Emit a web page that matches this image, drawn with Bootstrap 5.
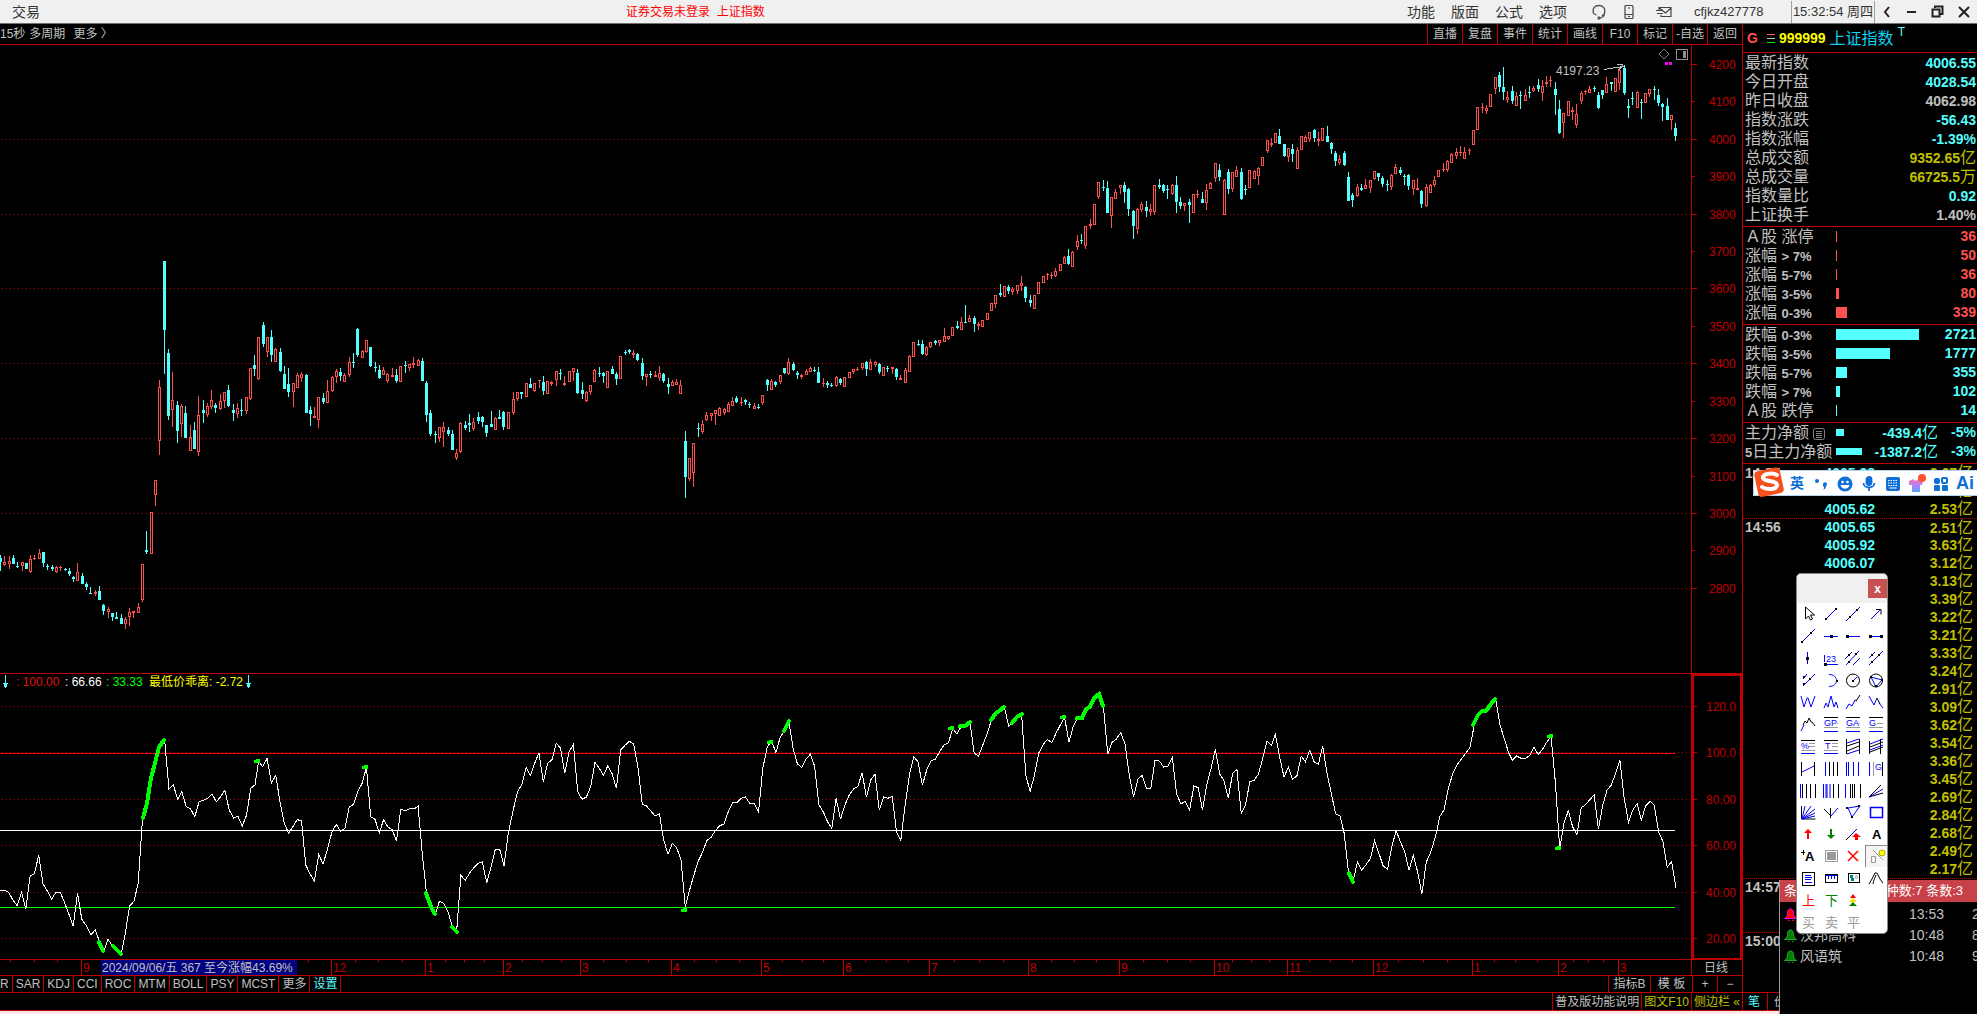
<!DOCTYPE html>
<html lang="zh-CN">
<head>
    <meta charset="UTF-8">
    <meta name="viewport" content="width=device-width, initial-scale=1.0">
    <title>上证指数</title>
    <link rel="stylesheet" href="https://cdn.jsdelivr.net/npm/bootstrap@5.3.0/dist/css/bootstrap.min.css">
    <style>
        :root {
            --line: #c00000;
            --up: #ff5050;
            --down: #54ffff;
            --txt: #c0c0c0;
            --gold: #c0c000;
        }
        body {
            background: #000;
            color: var(--txt);
            font-family: "Liberation Sans", "Noto Sans CJK SC", sans-serif;
            font-size: 12px;
            line-height: 16px;
            overflow-x: hidden;
        }
        button { background: none; border: 0; color: inherit; padding: 0; font-size: inherit; font-weight: inherit; line-height: inherit; white-space: nowrap; }
        .c-up { color: var(--up); }
        .c-down { color: var(--down); }
        .c-gold { color: var(--gold); }
        .c-yellow { color: #ffff00; }
        .c-name { color: #10d0f0; }

        /* title bar */
        .titlebar { height: 24px; background: #f0f0f0; color: #333; border-bottom: 1px solid #707070; font-size: 14px; }
        .titlebar .notice { color: #f00; font-size: 12px; margin-left: 586px; }
        .titlebar .clock { width: 84px; height: 22px; font-size: 13px; line-height: 22px; border-left: 1px solid #a0a0a0; border-right: 1px solid #a0a0a0; }
        .titlebar .account { width: 102px; padding-left: 5px; font-size: 13px; }
        .titlebar svg { display: block; }
        .win-btns { width: 102px; }

        /* rows of bordered buttons */
        .strip { height: 17px; border-top: 1px solid var(--line); }
        .strip-top { height: 21px; border-bottom: 1px solid var(--line); }
        .strip-last { height: 19px; border-top: 1px solid var(--line); border-bottom: 1px solid var(--line); font-size: 12px; font-weight: 400; line-height: 16px; }
        .cell-r button { border-right: 1px solid var(--line); padding: 0 3px; }
        .cell-r button:first-child { padding-left: 0; }
        .cell-l button { border-left: 1px solid var(--line); }
        .strip-top .cell-l button { width: 35px; }
        .strip-last button { padding: 0 2px; }
        .w-a { width: 42px; }
        .w-b { width: 25px; }
        .w-c { width: 51px; }
        .foot { height: 3px; background: #f8e8e8; }

        /* chart */
        .chart { display: block; width: 100%; height: auto; }
        .chart text { font-size: 12px; }

        /* quote column */
        .quote { width: 235px; border-left: 1px solid var(--line); font-size: 16px; line-height: 19px; }
        .quote b { font-size: 14px; font-weight: 700; }
        .quote .lbl b { font-size: 13px; }
        .q-head { height: 29px; border-bottom: 1px solid var(--line); padding: 0 4px; }
        .q-block { border-bottom: 1px solid var(--line); padding: 0 1px 2px 2px; }
        .q-row { height: 19px; white-space: nowrap; }
        .q-row .lbl { width: 91px; }
        .q-bar { height: 11px; background: currentColor; }
        .q-bar.slim { height: 7px; }
        .q-row .pct { width: 38px; }
        .tick { height: 18px; line-height: 18px; padding: 0 4px 0 2px; white-space: nowrap; }
        .tick.minute { border-top: 1px dotted var(--line); line-height: 17px; }
        .tick .t { width: 60px; }
        .tick .p { width: 70px; }
        .tick .yi { color: var(--gold); }

        /* floating windows */
        .desk { position: relative; overflow: hidden; }
        .ime { position: absolute; right: 0; top: 470px; width: 224px; height: 26px; background: #fff; border: 1px solid #b8d4f0; border-right: 0; padding: 0 0 0 31px; z-index: 3; color: #0f6fd8; font-size: 14px; font-weight: 700; }
        .ime .logo { position: absolute; left: 0; top: -5px; }
        .ime button { width: 24px; height: 24px; line-height: 24px; }
        .ime .ai { font-size: 18px; }
        .palette { position: absolute; right: 89px; top: 573px; width: 92px; background: #fff; border-radius: 5px; z-index: 4; border: 1px solid #888; }
        .palette .bar { height: 29px; background: #f0f0f0; border-radius: 4px 4px 0 0; }
        .palette .close-x { width: 19px; height: 19px; background: #c75050; color: #fff; font: 700 12px/16px "Liberation Sans", sans-serif; }
        .tools { display: grid; grid-template-columns: repeat(4, 1fr); }
        .tools button { height: 22px; }
        .tools button.on { background: #f4f4f4; border-left: 1px solid #888; border-top: 1px solid #888; }
        .tools svg { display: block; margin: auto; overflow: visible; }
        .tools text { font-size: 9px; font-family: "Liberation Sans", sans-serif; }
        .tools .cn { font: 13px "Noto Sans CJK SC", sans-serif; }
        .tools .lt { font: 700 13px "Liberation Sans", sans-serif; }
        .alerts { position: absolute; right: 0; top: 880px; width: 198px; height: 134px; background: #000; border-left: 1px solid #a0a0a0; z-index: 2; font-size: 14px; overflow: hidden; }
        .alerts .head { height: 22px; background: #c84048; color: #fff; padding: 0 14px 0 4px; font-size: 13px; }
        .alerts table { width: 220px; table-layout: fixed; }
        .alerts td { height: 21px; padding: 2px 0 0; white-space: nowrap; }
        .alerts .ic { width: 20px; padding-left: 4px; }
        .alerts .nm { width: 109px; }
        .alerts .tm { width: 63px; }
    </style>
</head>
<body>
<div class="desk min-vh-100 d-flex flex-column">

    <header class="titlebar d-flex align-items-center">
        <button type="button" class="ms-2 ps-1">交易</button>
        <span class="notice">证券交易未登录&nbsp; 上证指数</span>
        <div class="ms-auto d-flex align-items-center gap-3">
            <button type="button">功能</button>
            <button type="button">版面</button>
            <button type="button">公式</button>
            <button type="button">选项</button>
        </div>
        <div class="d-flex align-items-center gap-3 ms-4 me-3">
            <button type="button" aria-label="客服"><svg width="16" height="16" fill="none" stroke="#555" stroke-width="1.300"><path d="M2.500 9.500C1 4 4 1.500 8 1.500s7 3 5.500 8M2.500 9.500l3 1.500M13.500 9.500c0 3-3 5-6 4.500M11 12l2.500-2.500"/><circle cx="8" cy="14" r="1"/></svg></button>
            <button type="button" aria-label="手机"><svg width="12" height="16" fill="none" stroke="#444" stroke-width="1.200"><rect x="2" y="1.500" width="8" height="13" rx="1"/><path d="M2 10.500h8M5 12.500h2M5 4h2"/></svg></button>
            <button type="button" aria-label="邮件" class="ms-1"><svg width="18" height="16" fill="none" stroke="#444" stroke-width="1.200"><path d="M4 6V3.500h12v9H6V11M4.500 4l6 5L16 4M1 6.500h6M2 9.500h6"/></svg></button>
        </div>
        <span class="account">cfjkz427778</span>
        <span class="clock text-center text-nowrap">15:32:54 周四</span>
        <div class="win-btns d-flex justify-content-around align-items-center">
            <button type="button" aria-label="返回"><svg width="10" height="14" fill="none" stroke="#222" stroke-width="2"><path d="M7 2L3 7l4 5"/></svg></button>
            <button type="button" aria-label="最小化"><svg width="12" height="12" stroke="#222" stroke-width="2"><path d="M1 6h9"/></svg></button>
            <button type="button" aria-label="还原"><svg width="13" height="13" fill="none" stroke="#222" stroke-width="2"><path d="M4 3V1.500h7.500V9H9"/><rect x="1.500" y="4.500" width="7" height="7"/></svg></button>
            <button type="button" aria-label="关闭"><svg width="12" height="12" stroke="#222" stroke-width="2"><path d="M1 1l10 10M11 1L1 11"/></svg></button>
        </div>
    </header>

    <div class="d-flex flex-grow-1">
        <main class="flex-grow-1 d-flex flex-column">
            <nav class="strip-top d-flex align-items-stretch">
                <button type="button">15秒</button>
                <button type="button" class="ms-1">多周期</button>
                <button type="button" class="ms-2">更多 〉</button>
                <div class="cell-l d-flex ms-auto">
                    <button type="button">直播</button>
                    <button type="button">复盘</button>
                    <button type="button">事件</button>
                    <button type="button">统计</button>
                    <button type="button">画线</button>
                    <button type="button">F10</button>
                    <button type="button">标记</button>
                    <button type="button">-自选</button>
                    <button type="button">返回</button>
                </div>
            </nav>

            <svg class="chart" id="chart" viewBox="0 45 1742 930"></svg>

            <nav class="strip d-flex align-items-stretch">
                <div class="cell-r d-flex">
                    <button type="button">R</button>
                    <button type="button">SAR</button>
                    <button type="button">KDJ</button>
                    <button type="button">CCI</button>
                    <button type="button">ROC</button>
                    <button type="button">MTM</button>
                    <button type="button">BOLL</button>
                    <button type="button">PSY</button>
                    <button type="button">MCST</button>
                    <button type="button">更多</button>
                    <button type="button" class="c-down">设置</button>
                </div>
                <div class="cell-l d-flex ms-auto">
                    <button type="button" class="w-a">指标B</button>
                    <button type="button" class="w-a">模 板</button>
                    <button type="button" class="w-b">+</button>
                    <button type="button" class="w-b">−</button>
                </div>
            </nav>
            <footer class="strip-last cell-l d-flex justify-content-end align-items-stretch">
                <button type="button">普及版功能说明</button>
                <button type="button" class="c-gold">图文F10</button>
                <button type="button" class="c-gold w-c">侧边栏 «</button>
            </footer>
        </main>

        <aside class="quote d-flex flex-column flex-shrink-0">
            <div class="q-head d-flex align-items-center">
                <b class="c-up">G</b>
                <svg class="ms-2" width="9" height="11" shape-rendering="crispEdges"><path d="M1 1.500h8" stroke="#ff5050"/><path d="M1 5.500h8" stroke="#c0c0c0"/><path d="M1 9.500h8" stroke="#0f0"/></svg>
                <b class="c-yellow ms-1">999999</b>
                <span class="c-name ms-1">上证指数</span><sup class="c-down ms-1">T</sup>
            </div>
            <div class="q-block" id="quoteRows"></div>
            <div class="q-block" id="upRows"></div>
            <div class="q-block" id="downRows"></div>
            <div class="q-block" id="flowRows"></div>
            <div class="flex-grow-1" id="ticks"></div>
            <div class="strip-last cell-r d-flex align-items-stretch">
                <button type="button" class="c-down w-b">笔</button>
                <button type="button" class="w-b">价</button>
            </div>
        </aside>
    </div>
    <div class="foot"></div>

    <!-- input method bar -->
    <div class="ime d-flex align-items-center">
        <svg class="logo" width="32" height="32"><rect x="2" y="3" width="26" height="26" rx="4" fill="#f4511e" transform="rotate(-12 16 16)"/><path d="M23 9c-5-3-15-1-14 3 1 4 14 2 14 7 0 5-11 5-15 2" fill="none" stroke="#fff" stroke-width="4" stroke-linecap="round"/></svg>
        <button type="button">英</button>
        <button type="button" aria-label="标点"><svg width="16" height="16" fill="#0f6fd8"><circle cx="4" cy="5" r="2"/><path d="M10 8a2 2 0 1 1 3 2c0 2-1 3-3 4 1-1 1-2 1-3-1 0-1-2-1-3z"/></svg></button>
        <button type="button" aria-label="表情"><svg width="16" height="16"><circle cx="8" cy="8" r="7.500" fill="#0f6fd8"/><circle cx="5.500" cy="6" r="1.300" fill="#fff"/><circle cx="10.500" cy="6" r="1.300" fill="#fff"/><path d="M3.500 9h9c-1 5-8 5-9 0z" fill="#fff"/></svg></button>
        <button type="button" aria-label="语音"><svg width="16" height="16" fill="none" stroke="#0f6fd8" stroke-width="1.800"><rect x="5.500" y="1" width="5" height="8" rx="2.500" fill="#0f6fd8"/><path d="M2.500 7c0 6 11 6 11 0M8 12v3"/></svg></button>
        <button type="button" aria-label="键盘"><svg width="16" height="16"><rect x="1" y="1" width="14" height="14" rx="2" fill="#0f6fd8"/><path d="M3 4.500h10M3 7h10M3 9.500h10" stroke="#fff" stroke-dasharray="1.500 1"/><path d="M4.500 12h7" stroke="#fff"/></svg></button>
        <button type="button" aria-label="皮肤"><svg width="20" height="20"><defs><linearGradient id="skin" x1="0" y1="0" x2="0" y2="1"><stop offset="0" stop-color="#f27aa8"/><stop offset=".5" stop-color="#b080f8"/><stop offset="1" stop-color="#50a8ff"/></linearGradient></defs><path d="M2 7l4-2c1 2 4 2 5 0l5 2-1 4h-2v7H5v-7H2z" fill="url(#skin)"/><circle cx="15" cy="4" r="4" fill="#ff5030"/></svg></button>
        <button type="button" aria-label="工具箱"><svg width="16" height="16" fill="#0f6fd8"><rect x="1" y="2" width="6" height="6" rx="2"/><rect x="9" y="2" width="5" height="5" rx="1" fill="none" stroke="#0f6fd8" stroke-width="2"/><rect x="1" y="9" width="6" height="6" rx="1"/><rect x="9" y="9" width="6" height="6" rx="1"/></svg></button>
        <button type="button" class="ai">Ai</button>
    </div>

    <!-- drawing tools -->
    <div class="palette">
        <div class="bar d-flex justify-content-end align-items-center"><button type="button" class="close-x">x</button></div>
        <div class="tools" id="tools"></div>
    </div>

    <!-- alert window -->
    <div class="alerts">
        <div class="head d-flex justify-content-between align-items-center"><span>条</span><span>品种数:7 条数:3</span></div>
        <table>
            <tbody id="alertRows"></tbody>
        </table>
    </div>
</div>

<script src="https://cdn.jsdelivr.net/npm/bootstrap@5.3.0/dist/js/bootstrap.bundle.min.js"></script>
<script>
    const STEP = 4.303;   // distance between two bars

    // [x of the first bar, y origin, bars]; a bar is colour + high, body top, body bottom, low (1/3 px)
    const bars = [
        [0.5, 240, 'd945,954,966,993 u948,966,975,978 u948,963,972,987 d945,954,972,972 d966,978,981,984 u966,966,978,993 d969,969,987,987 u945,957,996,999 u945,954,957,960 u927,939,957,957 d936,936,969,981 d972,978,981,990 d975,981,987,993 u978,981,996,999 u978,981,984,993 d984,987,990,993 d984,993,1002,1008 d1008,1011,1017,1026 u969,996,1023,1023 d999,1008,1032,1032'],
        [86.6, 240, 'd1026,1032,1041,1050 d1041,1059,1062,1062 u1050,1056,1062,1068 d1038,1053,1080,1080 d1092,1095,1113,1125 u1101,1107,1116,1134 d1119,1119,1131,1143 d1116,1131,1137,1137 d1122,1134,1152,1152 u1131,1137,1152,1167 u1104,1116,1131,1158 u1113,1113,1119,1134 u1089,1101,1119,1119 u972,972,1080,1086 d873,930,936,942 u816,816,942,942 u720,720,765,798 u420,441,603,645'],
        [164.3, 240, 'd63,63,270,402 d327,339,528,540 u396,480,510,561 d483,495,573,609 u492,498,552,591 d498,519,594,594 u555,591,633,633 d546,570,627,627 u468,525,636,648 d480,510,519,549 u489,498,525,531 u450,480,501,507 d489,495,504,519 u462,483,507,510 u456,456,483,504 d435,450,498,501 d492,510,519,543 u489,504,522,534 d477,510,513,528 u471,471,513,522 u384,384,477,480 d345,375,387,408'],
        [258.7, 240, 'u291,291,417,420 d246,255,312,321 u291,291,336,351 d270,291,345,366 u324,327,366,366 d324,336,393,396 d378,402,447,447 d384,432,456,471 u429,429,456,501 u399,405,444,444 u396,402,414,426 d402,405,519,519 d498,510,522,558 u501,528,534,534 u471,471,540,564 d459,474,486,492 u420,453,489,489'],
        [332, 240, 'u408,411,453,456 u387,393,411,429 d384,396,408,423 u399,405,426,426 u351,366,405,411 d339,366,369,384 d264,267,345,351 u330,333,354,354 u300,300,336,339 d321,321,378,381 d366,381,384,396 d375,390,414,417 u381,390,405,405 u399,402,423,429 u384,405,411,411 d387,405,423,429 u378,378,426,426 d363,375,378,399 u372,372,384,393 u351,369,375,384 u357,360,378,378 d354,363,423,423'],
        [426.5, 240, 'd423,429,525,546 d510,519,582,588 d573,582,585,609 u561,561,594,606 u546,561,576,621 d561,570,582,588 d570,582,630,630 u627,639,654,660 u546,549,636,639 d543,555,564,570 d522,549,555,576 u534,546,567,573 d516,531,543,552 d528,531,546,561 d555,555,579,591 d513,552,561,561 u531,534,570,570 d510,531,537,537 d513,516,561,570 u516,516,567,567'],
        [513.2, 240, 'u456,477,519,525 u456,456,477,483 d456,456,462,477 u429,429,471,471 d414,432,444,444 u429,429,453,456 u420,420,423,444 d408,426,453,465 u423,423,462,462 u423,426,432,438 u393,393,420,438 d387,399,402,420 u408,429,435,438 u393,393,426,426 u384,384,396,423 d387,399,459,462 d426,450,462,477 u453,456,483,486 u435,435,456,465 u387,390,426,426'],
        [599.2, 240, 'd381,399,402,411 d396,399,408,429 u393,393,444,444 d378,387,402,402 d396,402,417,435 u348,348,417,417 d330,336,339,345 d327,330,336,342 u330,339,345,354 d339,342,360,363 d354,369,408,420 u402,402,411,438 d393,402,405,414 u393,405,411,411 u378,399,414,423 d399,402,423,429 d414,432,441,462 u420,426,438,438 u417,426,435,435 u420,435,462,462'],
        [685.3, 240, 'd573,603,711,774 u654,654,717,723 u609,609,699,741 d549,564,567,591 u540,552,576,582 u516,525,540,543 u519,519,528,543 u510,510,522,555 u501,504,528,528 u504,507,519,525 u486,492,516,516 u471,483,498,498 d468,474,486,489 u471,486,489,498 d477,480,486,495 d486,492,495,504 u489,498,507,507 d492,501,504,507 u465,465,489,495'],
        [767.3, 240, 'd417,420,435,453 u417,423,450,450 d423,426,435,441 u405,405,426,432 d384,384,399,402 u354,366,402,405 d366,372,390,393 d393,399,405,417 u402,405,411,417 u387,393,405,405 u378,384,396,396 d381,390,393,396 d381,396,429,429 u414,429,432,441 d423,429,435,444 d429,435,438,441 u408,411,438,441 d414,417,429,435 u411,411,441,441'],
        [849.2, 240, 'u396,396,414,414 u387,387,396,402 u381,387,390,393 u369,369,384,390 d363,366,387,408 u357,366,390,390 u363,366,375,381 d369,372,396,402 u381,381,408,408 d378,384,387,396 u381,381,387,402 d384,387,411,420 u405,414,420,420 u384,390,429,429 u345,348,396,396 u306,306,351,351 d300,312,315,318 d300,312,342,345 u318,321,345,348 u306,306,321,324'],
        [935.5, 240, 'd300,303,309,315 u300,300,309,318 u264,288,306,306 u288,288,297,300 u261,261,288,288 d243,258,264,267 u231,246,270,270 d195,246,249,249 u225,234,246,246 d228,234,252,276 u246,252,258,270 u240,240,261,261 u219,219,240,240 u189,189,213,213 u165,165,192,204 d132,159,165,171 u138,138,171,171 d135,141,153,162 u141,147,156,165 u135,135,153,162'],
        [1021.6, 240, 'u108,129,138,153 d138,141,174,186 d165,180,189,201 u165,165,207,207 u126,126,162,162 u108,108,129,129'],
        [1047.1, 50, 'u669,672,675,690 u666,675,678,687 u654,663,678,681 u642,642,663,663 u618,621,642,642 d597,618,642,645 u603,606,651,651 u555,573,591,600 d552,570,573,582 u528,528,588,597 u507,522,528,537 u462,462,525,525 u396,396,441,447 d390,411,414,423 d393,414,489,489 u441,441,498,534 u417,426,447,447 u405,405,414,432 d396,405,426,459 d414,417,477,498'],
        [1133.3, 50, 'd480,483,528,567 u474,477,537,552 u456,462,480,486 d453,471,483,501 u462,477,486,498 u405,405,486,495 d387,405,411,417 d402,405,423,429 d405,417,420,447 u402,405,432,435 d378,405,456,489 d441,456,468,477 u459,459,468,483 d447,456,465,519 u432,432,489,489 u420,432,435,444 d426,447,459,459 u402,420,459,480 u396,399,417,417'],
        [1215.4, 50, 'u339,339,384,396 d342,360,381,393 u387,390,495,495 d357,366,417,432 u366,366,417,426 u348,360,381,381 d354,366,447,450 d405,417,420,435 u360,360,414,414 u360,363,387,387 u351,354,378,405 u321,321,348,348 u270,270,303,309 u264,279,285,291 u249,249,279,279 d237,258,282,282 d282,282,318,321 u294,294,321,336 d282,297,312,336 u291,300,357,357'],
        [1301.2, 50, 'u258,258,300,300 u255,261,276,276 u246,246,267,276 d237,240,264,276 u246,267,273,288 u234,234,273,273 d228,258,276,276 d276,279,297,312 d303,309,333,348 u315,327,339,345 d303,309,345,348 d366,381,453,453 d429,435,450,471 u402,411,438,441 d402,414,420,423 u387,405,417,417 u390,390,414,429 u363,363,387,390 d369,369,381,393 d378,384,402,411'],
        [1387.3, 50, 'd390,402,405,423 u372,375,411,420 u342,351,372,372 d351,360,369,375 d372,378,381,405 d372,375,408,420 u390,390,417,435 u384,414,420,420 d420,423,462,474 u402,411,468,471 u402,405,429,429 u378,390,405,411 u360,360,381,381 u339,357,360,366 u330,333,360,366 u309,312,339,339 u294,306,318,327 u288,306,309,318 u291,306,327,327 u294,300,303,315'],
        [1473.5, 50, 'u240,240,285,285 u171,171,240,240 u159,171,174,189 u165,174,183,192 u132,132,171,171 u81,81,117,132 d66,75,111,126 d51,111,126,150 u123,141,150,159 d108,123,153,162 u126,138,168,168 d123,135,138,177 u117,135,153,153 d108,126,129,144 u108,114,123,126 d87,105,117,126 u90,108,129,153 u78,96,102,111 u78,90,93,111 d96,117,135,195'],
        [1559.6, 50, 'd150,177,249,252 u189,189,219,264 u153,153,198,198 u171,180,186,210 u162,192,225,234 u123,129,153,162 u120,123,126,135 u108,117,129,129 d108,114,117,126 d126,135,174,177 d120,120,135,147 u81,102,129,129 d96,96,102,123 u84,84,126,126 u57,60,99,120 d45,54,129,135 d147,168,174,204 d126,144,147,165 u123,126,174,174 d147,156,159,207'],
        [1645.5, 50, 'u129,129,159,159 u117,117,132,141 d108,117,120,150 d117,135,159,168 d159,162,171,213 d144,168,210,210 u195,195,210,240 d219,234,258,273']
    ];

    // indicator values, [x of the first one, values], same unit, origin y 660
    const wave = [
        [0, [691,691,697,720,737,697,748,648,641,586,672,693,718,697,697,727,762,798,700,778]],
        [86.6, [798,825,809,845,873,838,858,868,884,820,738,724,670,475,430,355,310,262]],
        [164.7, [242,388,374,418,395,440,446,470,425,421,415,402,425,410,391,450,474,469,498,466,385,374]],
        [258.5, [304,320,295,370,346,425,490,520,500,479,482,615,642,664,583,612,570]],
        [332, [515,493,514,505,441,433,395,370,322,470,478,519,479,501,509,544,448,453,446,447,439,585]],
        [426.5, [700,740,764,724,730,755,800,816,646,661,640,623,610,606,668,622,568,568,618,520]],
        [513.2, [450,395,374,322,346,310,278,367,310,300,250,264,340,275,253,395,418,411,380,307]],
        [599.2, [325,346,317,341,385,270,256,244,251,320,432,438,453,468,461,540,583,550,563,600]],
        [685.3, [742,690,645,604,577,542,532,512,497,492,455,428,428,415,411,430,430,457,325]],
        [767.3, [260,243,278,232,213,183,265,312,322,298,283,318,434,455,485,505,415,478,436]],
        [849.2, [405,387,380,338,411,360,343,451,411,415,409,515,541,435,345,290,305,376,330,302]],
        [935.5, [297,274,254,249,205,222,198,198,187,279,289,255,222,180,158,154,140,199,188,172]],
        [1021.6, [163,348,394,345,279,254,238,248,220,195,172,247,200,174,174,146,142,115,103,138]],
        [1107.8, [283,247,237,218,252,346,411,357,346,385,385,300,303,321,318,292,402,432,424,450]],
        [1193.9, [378,383,450,374,325,268,342,362,415,340,328,460,436,365,361,343,295,243,256]],
        [1275.4, [223,292,351,322,358,348,289,305,271,305,313,257,340,400,462,467,520,640,666]],
        [1357.4, [607,631,614,596,543,580,618,628,560,512,545,575,631,586,635,703,607,577]],
        [1435.5, [530,470,449,385,342,315,297,280,264,196,164,153,153,132,118,195,236,279]],
        [1512.4, [301,288,295,295,287,261,284,268,246,230,368,565,490,452,500,525,443,434]],
        [1589.8, [419,405,508,436,391,375,340,300,415,487,450,431,480,437,424,436,515,545,622,604,683]]
    ];

    // thick parts of the wave, and its single dots
    const strong = [
        '99,942 103,951', '113,946 121,954', '143,818 147,803 151,778 155,763 159,747 164,740',
        '426,893 431,907 435,914', '452,927 457,932', '784,731 789,721', '960,726 965,726 970,722',
        '991,720 996,713 999,711 1004,707', '1012,723 1017,717 1022,714',
        '1077,718 1082,718 1086,709 1090,707 1094,698 1099,694 1103,706', '1349,873 1353,882',
        '1473,725 1478,715 1482,711 1486,711 1491,704 1495,699'
    ];
    const dots = [[257, 761], [365, 767], [684, 910], [770, 742], [951, 728], [1063, 717], [1550, 736], [1558, 848]];

    const months = [[81, '9'], [331, '12'], [425, '1'], [503, '2'], [580, '3'], [671, '4'], [761, '5'], [843, '6'], [929, '7'], [1028, '8'],
        [1119, '9'], [1214, '10'], [1287, '11'], [1373, '12'], [1472, '1'], [1558, '2'], [1618, '3']];

    function drawChart() {
        const line = (x1, y1, x2, y2, color, extra = '') => `<path d="M${x1} ${y1}L${x2} ${y2}" stroke="${color}" ${extra}/>`;
        const text = (x, y, str, color, extra = '') => `<text x="${x}" y="${y}" fill="${color}" ${extra}>${str}</text>`;
        const red = '#c00000';
        let html = '<g fill="none" shape-rendering="crispEdges">';

        // price scale
        let labels = '';
        for (let p = 4200; p >= 2800; p -= 100) {
            const y = Math.round(63.8 + (4200 - p) * 0.3743) + 0.5;
            const even = p % 200 === 0;
            html += line(1692, y, even ? 1697 : 1695, y, red);
            if (even && p < 4200) html += line(2, y, 1688, y, red, 'stroke-dasharray="1 3"');
            labels += text(1709, y + 4, p, red);
        }

        // indicator scale
        ['120.0', '100.0', '80.00', '60.00', '40.00', '20.00'].forEach((v, i) => {
            const y = Math.round(706 + i * 46.4) + 0.5;
            html += line(1692, y, 1697, y, red);
            html += line(2, y, 1688, y, red, 'stroke-dasharray="1 3"');
            if (i) html += line(1692, y - 23, 1694, y - 23, red);
            labels += text(1706, y + 4, v, red);
        });

        // frames
        html += line(0, 673.5, 1742, 673.5, red) + line(1691.5, 45, 1691.5, 975, red);
        html += line(0, 959.5, 1742, 959.5, red);
        html += `<rect x="1693" y="675" width="48" height="284" stroke="${red}" stroke-width="2"/>`;

        // months, with three short marks between two of them
        months.forEach(([x, name], i) => {
            html += line(x + 0.5, 960, x + 0.5, 975, red);
            labels += text(x + 2, 972, name, red);
            const next = months[i + 1];
            if (next && i) {
                for (let k = 1; k < 4; k++) {
                    const tx = Math.round(x + (next[0] - x) * k / 4) + 0.5;
                    html += line(tx, 960, tx, 962, red);
                }
            }
        });
        [10, 34, 57, 308].forEach(x => html += line(x + 0.5, 960, x + 0.5, 962, red));

        // bars
        bars.forEach(([x0, y0, row]) => {
            row.split(' ').forEach((bar, i) => {
                const [h, t, b, l] = bar.slice(1).split(',').map(v => Math.round(y0 + v / 3));
                const x = Math.round(x0 + i * STEP - 0.5);
                if (bar[0] === 'd') {
                    html += `<path d="M${x} ${h}h1v${l - h}h-1zM${x - 1} ${t}h3v${Math.max(b - t, 1)}h-3z" fill="#54ffff"/>`;
                } else {
                    html += `<path d="M${x + 0.5} ${h}V${t}M${x + 0.5} ${b}V${l}" stroke="#ff5050"/>`;
                    if (b - t < 2) html += `<rect x="${x - 1}" y="${t}" width="3" height="1" fill="#ff5050"/>`;
                    else html += `<rect x="${x - 0.5}" y="${t + 0.5}" width="2" height="${b - t - 1}" stroke="#ff5050"/>`;
                }
            });
        });

        // indicator
        html += line(0, 753.5, 1675, 753.5, '#f00') + line(0, 830.5, 1675, 830.5, '#fff') + line(0, 907.5, 1675, 907.5, '#0f0');
        const pts = [];
        wave.forEach(([x0, row]) => row.forEach((v, i) => pts.push((x0 + i * STEP).toFixed(1) + ',' + (660 + v / 3).toFixed(1))));
        html += `<polyline points="${pts.join(' ')}" stroke="#fff"/>`;
        strong.forEach(p => html += `<polyline points="${p}" stroke="#0f0" stroke-width="4" stroke-linecap="round"/>`);
        dots.forEach(([x, y]) => html += `<rect x="${x - 3}" y="${y - 1}" width="6" height="3" fill="#0f0"/><rect x="${x - 1}" y="${y - 2}" width="4" height="4" fill="#0f0"/>`);

        // highest price and the small marks of the corner
        html += '<path d="M1604 69.500L1623 66.500M1617 64.500h5l1 2-5 3" stroke="#c0c0c0"/>';
        html += '<path d="M1664 49l5 5-5 5-5-5z" stroke="#808080"/><path d="M1665 62h3v3h-3zM1669 62h3v3h-3z" fill="#f0f"/>';
        html += '<rect x="1676.500" y="49.500" width="11" height="10" rx="1" stroke="#909090"/><rect x="1683" y="51" width="3" height="7" fill="#909090"/>';

        // value arrows
        [5, 248].forEach(x => html += `<path d="M${x + 0.5} 675v9" stroke="#54ffff"/><path d="M${x - 2} 683h5l-2 5h-1z" fill="#54ffff"/>`);
        html += '<rect x="101" y="960" width="196" height="15" fill="#000080"/></g>';

        labels += text(1556, 75, '4197.23', '#c0c0c0');
        labels += text(16, 686, ': 100.00', '#e01010') + text(65, 686, ': 66.66', '#fff') + text(106, 686, ': 33.33', '#0f0') + text(149, 686, '最低价乖离: -2.72', '#ff0');
        labels += text(102, 972, '2024/09/06/五 367 至今涨幅43.69%', '#c0c0c0') + text(1704, 972, '日线', '#c0c0c0');
        document.querySelector('#chart').innerHTML = html + labels;
    }

    function renderQuote() {
        const rows = [
            ['最新指数', '4006.55', 'c-down'], ['今日开盘', '4028.54', 'c-down'], ['昨日收盘', '4062.98', ''],
            ['指数涨跌', '-56.43', 'c-down'], ['指数涨幅', '-1.39%', 'c-down'], ['总成交额', '9352.65', 'c-gold', '亿'],
            ['总成交量', '66725.5', 'c-gold', '万'], ['指数量比', '0.92', 'c-down'], ['上证换手', '1.40%', '']
        ];
        document.querySelector('#quoteRows').innerHTML = rows.map(r => `
            <div class="q-row d-flex justify-content-between"><span>${r[0]}</span><span class="${r[2]}"><b>${r[1]}</b>${r[3] || ''}</span></div>`).join('');

        const bar = (rows, cls) => rows.map(r => `
            <div class="q-row d-flex align-items-center"><span class="lbl">${r[0]} <b>${r[1]}</b></span><span class="q-bar ${cls}" style="width: ${r[3]}px"></span><b class="ms-auto ${cls}">${r[2]}</b></div>`).join('');
        document.querySelector('#upRows').innerHTML = bar([
            ['Ａ股 涨停', '', 36, 1], ['涨幅', '&gt; 7%', 50, 1], ['涨幅', '5-7%', 36, 1], ['涨幅', '3-5%', 80, 3], ['涨幅', '0-3%', 339, 11]
        ], 'c-up');
        document.querySelector('#downRows').innerHTML = bar([
            ['跌幅', '0-3%', 2721, 83], ['跌幅', '3-5%', 1777, 54], ['跌幅', '5-7%', 355, 11], ['跌幅', '&gt; 7%', 102, 4], ['Ａ股 跌停', '', 14, 1]
        ], 'c-down');

        const note = ' <svg width="12" height="12" fill="none" stroke="#808080"><rect x=".5" y=".5" width="11" height="11" rx="2"/><path d="M3 3.500h6M3 5.500h6M3 7.500h6M3 9.500h6"/></svg>';
        const flows = [['主力净额' + note, 8, '-439.4', '-5%'], ['<b>5</b>日主力净额', 26, '-1387.2', '-3%']];
        document.querySelector('#flowRows').innerHTML = flows.map(r => `
            <div class="q-row d-flex align-items-center"><span class="lbl">${r[0]}</span><span class="q-bar slim c-down" style="width: ${r[1]}px"></span><span class="ms-auto c-down"><b>${r[2]}</b>亿</span><b class="pct text-end c-down">${r[3]}</b></div>`).join('');
    }

    function renderTicks() {
        const ticks = [
            ['14:55', '4005.38', '2.67'], ['', '4006.01', '2.60'], ['', '4005.62', '2.53'], ['14:56', '4005.65', '2.51'],
            ['', '4005.92', '3.63'], ['', '4006.07', '3.12'], ['', '', '3.13'], ['', '', '3.39'], ['', '', '3.22'], ['', '', '3.21'],
            ['', '', '3.33'], ['', '', '3.24'], ['', '', '2.91'], ['', '', '3.09'], ['', '', '3.62'], ['', '', '3.54'], ['', '', '3.36'],
            ['', '', '3.45'], ['', '', '2.69'], ['', '', '2.84'], ['', '', '2.68'], ['', '', '2.49'], ['', '', '2.17'],
            ['14:57', '', ''], ['', '', ''], ['', '', ''], ['15:00', '', '']
        ];
        document.querySelector('#ticks').innerHTML = ticks.map((r, i) => `
            <div class="tick d-flex ${r[0] && i ? 'minute' : ''}"><b class="t">${r[0]}</b><b class="p text-end c-down">${r[1]}</b><span class="yi ms-auto">${r[2] ? `<b>${r[2]}</b>亿` : ''}</span></div>`).join('');
    }

    function renderTools() {
        const path = color => d => `<path d="${d}" fill="none" stroke="${color}"/>`;
        const b = path('#00f'), k = path('#000'), g = path('#999');
        const dot = (...p) => p.map(([x, y]) => `<rect x="${x - 1}" y="${y - 1}" width="2" height="2"/>`).join('');
        const word = (x, y, s, c = '#00f', cls = '') => `<text x="${x}" y="${y}" fill="${c}" class="${cls}">${s}</text>`;
        const lines = (s, w) => k('M1 1.500h14') + word(1, 10, s) + g(`M${w} 7.500H15M1 11.500H15`) + b('M1 15.500h14');

        const tools = [
            '<path d="M5.500 1v12l3-3 2 4 2-1-2-4h4z" fill="#fff" stroke="#000"/>',
            b('M3 13L13 3') + dot([3, 13], [13, 3]),
            b('M1 15L15 1') + dot([5, 11], [12, 4]),
            b('M3 13L13 3') + k('M8 3.500h5v5'),
            b('M1 15L15 1') + dot([2, 14], [11, 5]),
            b('M1 8.500h14') + '<rect x="7" y="7" width="3" height="3"/>',
            b('M1 8.500h14') + '<rect x="1" y="7" width="3" height="3"/>',
            b('M1 8.500h14') + '<rect x="1" y="7" width="3" height="3"/><rect x="12" y="7" width="3" height="3"/>',
            b('M7.500 2v12') + '<rect x="6" y="7" width="3" height="3"/>',
            b('M1.500 5v7M4 14.500h11') + word(3, 12, '23') + '<rect x="1" y="13" width="3" height="3"/>',
            b('M0 9L7 2M1 15L14 1M8 15l7-7') + dot([4, 5], [4, 12], [11, 4]),
            b('M1 8L7 2M1 15L15 1') + dot([4, 5], [4, 12], [11, 5]),
            b('M3 7L7 2M3 14L15 2') + dot([4, 5], [4, 12], [10, 7]),
            b('M6 2.500c10 0 10 12 0 12') + '<rect x="13" y="8" width="2" height="2"/>',
            '<circle cx="8" cy="8.500" r="6.500" fill="none" stroke="#000"/>' + b('M8 9l4-4') + dot([8, 9]),
            '<circle cx="8" cy="8.500" r="6.500" fill="none" stroke="#000"/>' + b('M3 5l11 3-6 7z') + dot([3, 5], [14, 8], [8, 14]),
            b('M1 2l3 11 3-9 1 0 3 9 4-11'),
            b('M1 14l2-5 2 4 3-11 3 11 2-5 2 6'),
            b('M1 15l3-5 3 2 3-6 2 1') + k('M11 7l4-6'),
            b('M1 2l5 9 3-7') + k('M9 4l3 6') + b('M11 9l4 5'),
            b('M1 15l3-6') + k('M3 9l2-4 2 2 2-5 2 4 1 0 3 4'),
            lines('GP', 14), lines('GA', 14), lines('G', 9),
            k('M1 2.500h14') + word(1, 11, '%') + g('M9 5.500h6M9 8.500h6M1 12.500h14') + b('M1 15.500h14'),
            k('M1 2.500h14') + word(2, 11, 'T') + g('M9 5.500h6M9 8.500h6M1 12.500h14') + b('M1 15.500h14'),
            k('M1.500 1v15M14.500 1v15M2 8l12-4M2 13l12-5') + b('M2 5l12-4M2 16l12-4'),
            k('M1.500 3v13M12.500 1v15M2 9l13-5M2 14l13-5') + b('M2 6l13-5M2 12l13-5'),
            k('M1.500 2v14M14.500 2v14') + b('M2 12l12-6'),
            b('M2.500 2v14') + k('M6.500 2v14M10.500 2v14M14.500 2v14'),
            b('M1.500 2v14M3.500 2v14M8.500 2v14M13.500 2v14'),
            b('M1.500 2v14') + g('M5.500 2v14') + word(7, 10, 'G') + k('M14.500 2v14'),
            b('M.5 2v14') + k('M2.500 2v14M6.500 2v14M10.500 2v14M15.500 2v14'),
            b('M.5 2v14M3 2v14M4 2v14M7 2v14') + k('M10.500 2v14M15.500 2v14'),
            b('M.5 2v14') + k('M5.500 2v14M7.500 2v14M9.500 2v14M15.500 2v14'),
            k('M1 15L13 3M1 15l14-4') + b('M1 15l14-8'),
            k('M1.500 2v13h14') + b('M2 15L5 2M2 15L11 2M2 15L15 5M2 15l13-6M2 15l13-3'),
            k('M1 5l7 7M7.500 4v10') + b('M8 12l7-8'),
            b('M3 4l12-2-8 11z') + dot([2, 4], [14, 2], [7, 13]),
            '<rect x="2.500" y="3.500" width="12" height="10" fill="none" stroke="#00f" stroke-width="1.500"/>',
            '<path d="M8 3l4 4H9v6H7V7H4z" fill="#f00"/>',
            '<path d="M8 13l4-4H9V3H7v6H4z" fill="#008000"/>',
            k('M1 14L12 3') + '<path d="M11 7l5 4h-3v3h-3v-3H7z" fill="#f00"/>' + b('M6 9l6-6'),
            word(4, 13, 'A', '#000', 'lt'),
            word(5, 13, 'A', '#000', 'lt') + k('M1 4.500h4M3.500 2v5'),
            '<rect x="2.500" y="2.500" width="12" height="11" fill="none" stroke="#999"/><rect x="4" y="4" width="9" height="8" fill="#999"/>',
            '<path d="M3 3l10 10M13 3L3 13" stroke="#f00" stroke-width="1.500"/>',
            g('M3.500 8.500h4v6h-4zM5 2l10 10') + '<circle cx="14" cy="5" r="3" fill="#ff0" stroke="#aa0"/>',
            '<rect x="2.500" y="2.500" width="12" height="13" fill="none" stroke="#000"/>' + b('M5 5.500h6M5 7.500h7M5 9.500h6M5 12.500h7'),
            '<rect x="2.500" y="4.500" width="12" height="8" fill="none" stroke="#000"/>' + b('M2 5.500h12M5.500 6v3M8.500 6v3M11.500 6v3'),
            '<rect x="3.500" y="3.500" width="11" height="9" fill="none" stroke="#000"/><rect x="5" y="5" width="3" height="3" fill="#088"/><rect x="6" y="8" width="3" height="3" fill="#088"/><path d="M10 6h3M10 8h3" stroke="#999"/>',
            k('M1 14L4 9l3-6h2l3 6 3 4M5 14c1-5 2-6 3-9'),
            word(2, 13, '上', '#f00', 'cn'), word(2, 13, '下', '#008000', 'cn'),
            '<path d="M8 2l3 4H5z" fill="#f00"/><path d="M8 6l4 4H4z" fill="#fd0"/><path d="M8 10l4 4H4z" fill="#008000"/>',
            '',
            word(2, 13, '买', '#999', 'cn'), word(2, 13, '卖', '#999', 'cn'), word(2, 13, '平', '#999', 'cn'), ''
        ];
        document.querySelector('#tools').innerHTML = tools.map((t, i) => t
            ? `<button type="button" class="${i === 47 ? 'on' : ''}"><svg width="16" height="17">${t}</svg></button>` : '<span></span>').join('');
    }

    function renderAlerts() {
        const rows = [['#f00', '#f0f', '', '13:53', '2'], ['#008000', '#30a030', '汉邦高科', '10:48', '8'], ['#008000', '#30a030', '风语筑', '10:48', '9']];
        document.querySelector('#alertRows').innerHTML = rows.map(r => `
            <tr>
                <td class="ic"><svg width="13" height="14"><path d="M6.500 1C4 1 3.500 3 3.500 5.500S2.500 8.500.5 10.500h12c-2-2-3-2.500-3-5S9 1 6.500 1z" fill="${r[0]}" stroke="${r[1]}"/><path d="M4 12.500h2M8 12.500h2" stroke="${r[0]}"/></svg></td>
                <td class="nm">${r[2]}</td><td class="tm">${r[3]}</td><td>${r[4]}</td>
            </tr>`).join('');
    }

    drawChart();
    renderQuote();
    renderTicks();
    renderTools();
    renderAlerts();
</script>
</body>
</html>
